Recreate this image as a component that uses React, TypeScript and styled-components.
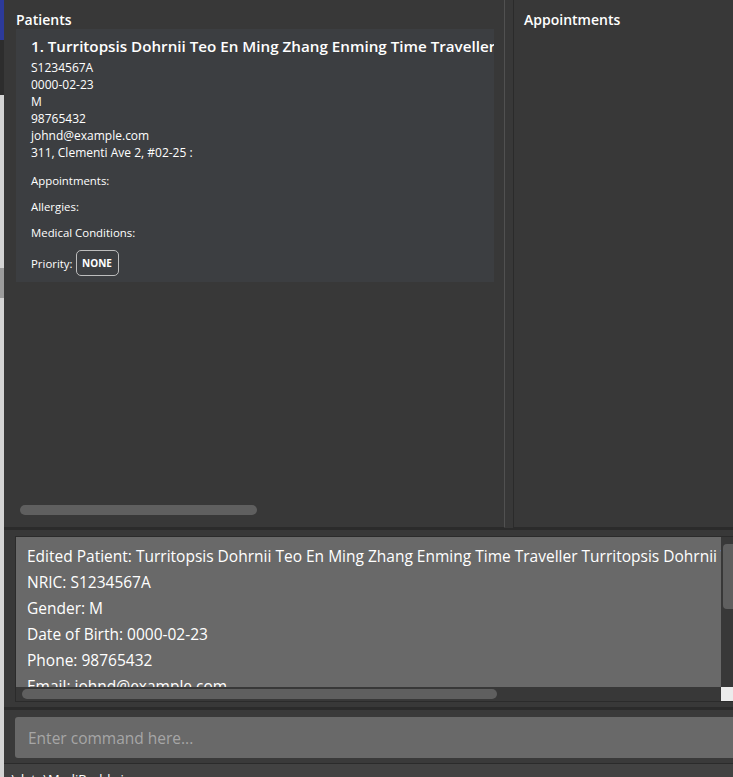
import React from "react";
import styled, { createGlobalStyle } from "styled-components";

const Global = createGlobalStyle`
  html, body { margin: 0; padding: 0; background: #383838; }
  body { width: 733px; height: 777px; overflow: hidden; }
  * { box-sizing: border-box; }
`;

const FONT = `"Open Sans", "Noto Sans", sans-serif`;

const Root = styled.div`
  width: 733px;
  height: 777px;
  display: flex;
  background: #383838;
  font-family: ${FONT};
  color: #ffffff;
  overflow: hidden;
`;

const EdgeStrip = styled.div`
  width: 4px;
  flex: 0 0 4px;
  background: linear-gradient(
    to bottom,
    #2c3a9a 0px, #2c3a9a 40px,
    #2d2d2d 40px, #2d2d2d 95px,
    #d4d4d4 95px, #d4d4d4 268px,
    #9c9c9c 268px, #9c9c9c 298px,
    #d4d4d4 298px
  );
`;

const Window = styled.div`
  flex: 1;
  display: flex;
  flex-direction: column;
  min-width: 0;
`;

const Main = styled.div`
  height: 530px;
  display: flex;
  border-bottom: 2px solid #2b2b2b;
`;

const Panel = styled.section<{ $w?: number }>`
  ${(p) => (p.$w ? `width: ${p.$w}px; flex: 0 0 ${p.$w}px;` : "flex: 1;")}
  display: flex;
  flex-direction: column;
  background: #383838;
  min-width: 0;
`;

const PatientsPanel = styled(Panel)`
  border-right: 1px solid #515151;
  border-bottom: 1px solid #2b2b2b;
  padding: 10px 0 0 12px;
`;

const AppointmentsPanel = styled(Panel)`
  border-left: 1px solid #2b2b2b;
  border-bottom: 1px solid #2b2b2b;
  padding: 10px 0 0 10px;
`;

const Gutter = styled.div`
  width: 8px;
  flex: 0 0 8px;
`;

const PanelTitle = styled.h2`
  margin: 0;
  font-size: 14px;
  line-height: 19px;
  font-weight: 600;
  color: #ffffff;
`;

const ListArea = styled.div`
  flex: 1;
  display: flex;
  flex-direction: column;
  padding-right: 10px;
  min-height: 0;
`;

const Card = styled.div`
  width: 478px;
  height: 253px;
  background: #3c3e41;
  padding: 7px 0 0 15px;
  overflow: hidden;
  display: flex;
  flex-direction: column;
`;

const Name = styled.div`
  font-size: 15.2px;
  font-weight: 600;
  line-height: 20px;
  color: #ffffff;
  white-space: nowrap;
  margin-bottom: 3px;
`;

const Detail = styled.div`
  font-size: 12px;
  line-height: 17px;
  color: #ffffff;
  white-space: nowrap;
`;

const Section = styled.div<{ $gap: number }>`
  font-size: 11.4px;
  line-height: 17px;
  margin-top: ${(p) => p.$gap}px;
  display: flex;
  align-items: center;
  gap: 3px;
`;

const Badge = styled.span`
  display: inline-flex;
  align-items: center;
  justify-content: center;
  height: 26px;
  width: 43px;
  border: 1px solid #bdbdbd;
  border-radius: 5px;
  font-size: 10px;
  font-weight: 700;
  color: #ffffff;
`;

const Spacer = styled.div`
  flex: 1;
`;

const HScroll = styled.div<{ $w: number; $ml: number; $h: number }>`
  width: ${(p) => p.$w}px;
  height: ${(p) => p.$h}px;
  margin-left: ${(p) => p.$ml}px;
  background: #5f5f5f;
  border-radius: 5px;
`;

const ListScrollRow = styled.div`
  height: 22px;
  display: flex;
  align-items: flex-start;
`;

const ResultSection = styled.div`
  height: 178px;
  padding: 6px 0 0 11px;
  border-bottom: 1px solid #2b2b2b;
  display: flex;
  flex-direction: column;
`;

const ResultFrame = styled.div`
  border: 1px solid #2b2b2b;
  border-right: none;
  display: grid;
  grid-template-columns: 705px 12px;
  grid-template-rows: 150px 14px;
`;

const ResultText = styled.div`
  background: #696969;
  padding: 6px 0 0 11px;
  overflow: hidden;
`;

const ResultLine = styled.div`
  font-size: 15.5px;
  line-height: 26px;
  color: #ffffff;
  white-space: nowrap;
`;

const VTrack = styled.div`
  background: #383838;
  padding: 7px 0 0 2px;
`;

const VThumb = styled.div`
  height: 65px;
  background: #5f5f5f;
  border-radius: 4px 0 0 4px;
`;

const HTrack = styled.div`
  background: #383838;
  padding: 2px 0 0 6px;
`;

const Corner = styled.div`
  background: #ececec;
`;

const CommandSection = styled.div`
  height: 56px;
  border-top: 2px solid #2b2b2b;
  background: #3a3a3a;
  padding: 7px 0 0 11px;
  border-bottom: 1px solid #2b2b2b;
`;

const CommandInput = styled.input`
  width: 720px;
  height: 41px;
  background: #696969;
  border: none;
  border-radius: 3px;
  padding: 0 13px;
  font-family: ${FONT};
  font-size: 15.5px;
  color: #ffffff;
  outline: none;
  &::placeholder { color: #a6a6a6; }
`;

const StatusBar = styled.div`
  flex: 1;
  background: #424242;
  padding: 7px 0 0 4px;
  font-size: 13px;
  line-height: 17px;
  color: #ffffff;
  overflow: hidden;
  white-space: nowrap;
`;

export default function App() {
  return (
    <>
      <Global />
      <Root>
        <EdgeStrip />
        <Window>
          <Main>
            <PatientsPanel $w={501}>
              <PanelTitle>Patients</PanelTitle>
              <ListArea>
                <Card>
                  <Name>1. Turritopsis Dohrnii Teo En Ming Zhang Enming Time Traveller</Name>
                  <Detail>S1234567A</Detail>
                  <Detail>0000-02-23</Detail>
                  <Detail>M</Detail>
                  <Detail>98765432</Detail>
                  <Detail>johnd@example.com</Detail>
                  <Detail>311, Clementi Ave 2, #02-25 :</Detail>
                  <Section $gap={11}>Appointments:</Section>
                  <Section $gap={9}>Allergies:</Section>
                  <Section $gap={9}>Medical Conditions:</Section>
                  <Section $gap={9}>
                    Priority: <Badge>NONE</Badge>
                  </Section>
                </Card>
                <Spacer />
                <ListScrollRow>
                  <HScroll $w={237} $ml={4} $h={10} />
                </ListScrollRow>
              </ListArea>
            </PatientsPanel>
            <Gutter />
            <AppointmentsPanel>
              <PanelTitle>Appointments</PanelTitle>
            </AppointmentsPanel>
          </Main>
          <ResultSection>
            <ResultFrame>
              <ResultText>
                <ResultLine>
                  Edited Patient: Turritopsis Dohrnii Teo En Ming Zhang Enming Time Traveller Turritopsis Dohrnii Teo En Ming
                </ResultLine>
                <ResultLine>NRIC: S1234567A</ResultLine>
                <ResultLine>Gender: M</ResultLine>
                <ResultLine>Date of Birth: 0000-02-23</ResultLine>
                <ResultLine>Phone: 98765432</ResultLine>
                <ResultLine>Email: johnd@example.com</ResultLine>
              </ResultText>
              <VTrack>
                <VThumb />
              </VTrack>
              <HTrack>
                <HScroll $w={475} $ml={0} $h={10} />
              </HTrack>
              <Corner />
            </ResultFrame>
          </ResultSection>
          <CommandSection>
            <CommandInput placeholder="Enter command here..." readOnly />
          </CommandSection>
          <StatusBar>.\data\MediBuddy.json</StatusBar>
        </Window>
      </Root>
    </>
  );
}
